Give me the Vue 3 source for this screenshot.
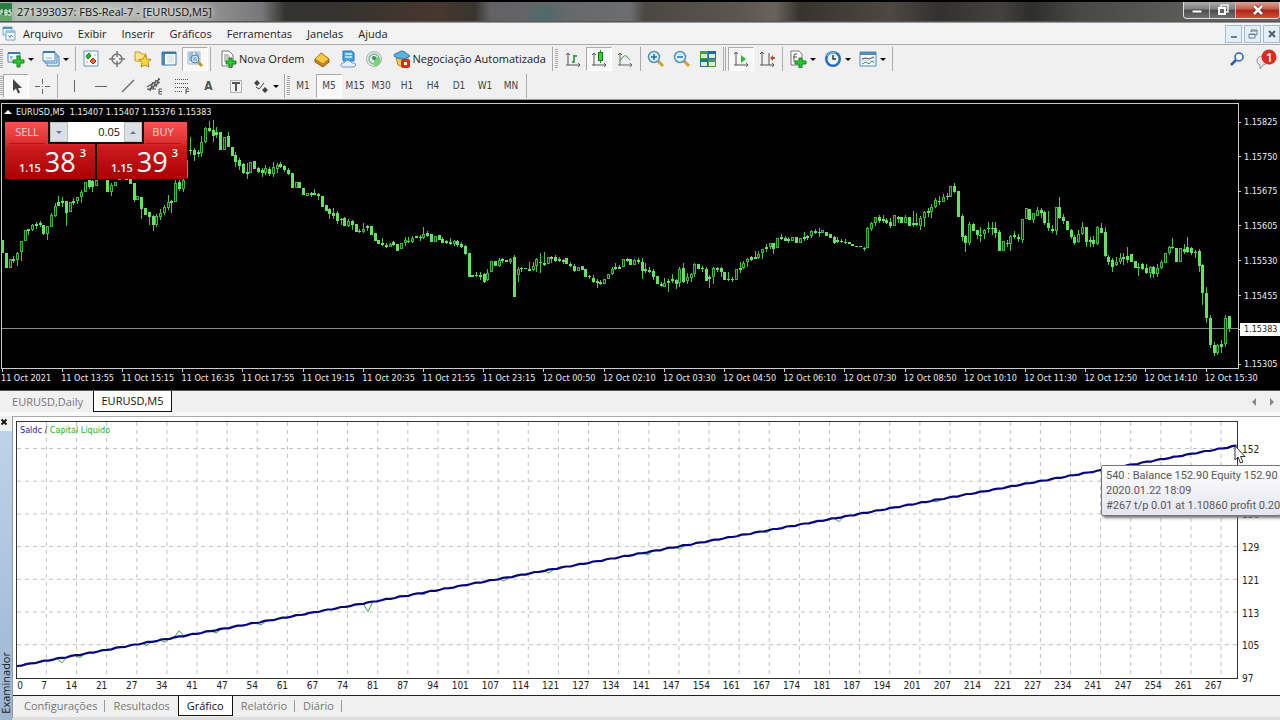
<script setup>
import { ref } from 'vue'

const menus = ['Arquivo', 'Exibir', 'Inserir', 'Gráficos', 'Ferramentas', 'Janelas', 'Ajuda']
const frames = ['M1', 'M5', 'M15', 'M30', 'H1', 'H4', 'D1', 'W1', 'MN']
const lots = ref('0.05')
const activeFrame = ref('M5')

const prices = ['1.15825', '1.15750', '1.15675', '1.15605', '1.15530', '1.15455', '1.15383', '1.15305']
const times = [
  '11 Oct 2021', '11 Oct 13:55', '11 Oct 15:15', '11 Oct 16:35', '11 Oct 17:55', '11 Oct 19:15', '11 Oct 20:35',
  '11 Oct 21:55', '11 Oct 23:15', '12 Oct 00:50', '12 Oct 02:10', '12 Oct 03:30', '12 Oct 04:50', '12 Oct 06:10',
  '12 Oct 07:30', '12 Oct 08:50', '12 Oct 10:10', '12 Oct 11:30', '12 Oct 12:50', '12 Oct 14:10', '12 Oct 15:30'
]

/* Candles: kind (f = falling, h = rising), body top, body bottom, optional high and low. */
const series = [
  { base: 100, first: 0, rows: 'f420,458 f458,503 h478,503 f478,482,468,490 h460,480,455,497 h424,457,424,482 h390,424 f388,393,388,405 h376,390,372,394 f372,378,366,387 f369,375,362,380 f375,402,375,405 h378,402,378,420 h344,380,340,380 h317,347,310,350 f306,318,288,318 f303,308,292,320 f304,338,304,377 h307,337 f303,308,295,315 h290,303,290,313 h277,292,270,308 h245,277 f240,262,240,266 f243,262,240,275 h240,258 f200,220 f200,230 f240,275 h255,275,250,288 h245,258 h220,240 f210,225 f215,240 f238,253 f250,300,250,305 h288,300 f290,327,290,357 f325,345 f337,352,337,375 f348,376,345,393 h348,375,342,380 h338,350,328,360 h322,340,315,346 h305,323,285,330 f303,310,300,340 h250,305,240,305 f245,268,240,273 h240,268,235,277 h180,235 f150,153,110,165 f150,165,145,183 f157,163,150,170 h125,158,108,170 h85,125,80,130 f85,93,62,97 f90,107,60,125 f97,105,80,115 f97,150 h112,150 f108,142,95,142 f140,167 f165,187,155,200 f180,197,175,210 f193,220,190,222 f217,222,190,238 h185,220 f183,207 f205,215,200,220 f210,220,205,230 h205,220,195,225 f207,222,200,228 h202,222,185,232 h195,207,190,220 f192,200,187,205 f198,210,195,215 f210,222,203,225 f220,265 h245,263' },
  { base: 180, first: 79, rows: 'f5,24 f24,44 h38,48 f40,45,36,50 f38,44,28,46 f42,48,38,60 f48,80 f75,93 f88,102,85,118 f100,107,85,118 f99,122,92,132 f117,120,114,135 f115,138,110,138 h123,138,117,140 f123,135,120,150 f132,157 f153,157,147,160 h148,157,130,160 h137,145,135,152 f138,165 f160,182 f180,193 f188,195,175,198 f195,200,188,205 h192,200,188,202 f185,195,182,198 f193,212 h190,208 h180,190,170,198 f183,187,172,190 h173,187,168,190 h167,175 f170,173,165,182 h163,175,142,178 f160,168,152,170 f163,187 h167,187 f165,180 f178,188,172,190 f183,190,180,192 f185,193,175,195 h182,193,180,197 f182,195,180,202 f192,200,187,203 f198,222,195,224 f220,290 f286,290 f285,288,275,290 f285,290,275,300 f283,305,280,310 h278,300,268,302 h243,275 f242,257 h240,257,235,260 f238,243,235,250 f240,246 h238,247,235,252 f230,352,225,352 h267,285,262,305 f265,268,262,275 f263,267 f268,272,245,274 h258,270,245,272 h237,258,233,275 f245,250,220,280 f250,256,217,258 h232,253 f232,238,228,250 f230,242,225,246 f238,243,232,246 f240,245,236,252 f235,253 f252,257,246,260 f257,273,252,276 h262,273 f258,270 f268,290 f288,292,284,296 f293,305,285,308 f303,308,298,325 f305,313,300,315 h297,313 h282,298 h268,283,262,285 h260,268,250,270 f260,266,254,268' },
  { base: 180, first: 165, rows: 'h238,260 f237,242,235,246 f238,254 h240,254,236,256 f240,247,235,252 f247,272,235,297 f268,273,250,280 f270,275,262,280 f272,290,268,300 f287,313 f313,318,306,320 h310,320,295,322 f303,308,298,335 f297,303,283,310 f300,312,298,328 h268,308,262,320 f265,305,248,308 h292,303,280,312 h283,293,280,305 h252,283,250,290 f253,267 f263,268,257,275 f267,302,262,304 f292,297,286,325 h265,290,262,312 f265,270,262,276 f265,275,262,290 f275,300 f297,300,277,304 f297,300,290,305 h268,300 f263,270,245,280 h248,265,242,268 h237,247,235,260 f232,240,228,242 f230,237,213,238 h222,235,213,237 h208,220,206,237 h200,208,192,215 h190,202,188,206 f190,207,188,223 h175,205 f172,177,163,180 f173,182,168,184 f177,182,172,188 h170,182 f170,188 h175,188 f172,177,157,182 h168,175,164,180 h153,168,150,174 f153,158,148,162 f155,160,143,170 h150,160 f155,167 f163,173 f172,190,168,193 f180,187,170,190 f182,186,177,190 f185,187,177,193 f185,193 f193,197 f198,200 f198,202 f203,207,202,213 h145,205,142,205 h128,147,126,153 h112,130,110,138 f110,123,106,128 f117,123,105,128 f120,128,114,132 f125,137,115,143 h105,138 f112,116,107,130 f110,128 h110,128,106,130 f112,137 f130,134,93,140 f130,135,100,138 h113,137,108,150 h95,113,93,140 f93,98,84,112 h80,97,72,115 h60,82,53,84 f63,66,47,74' },
  { base: 170, first: 250, rows: 'h80,95,72,97 f77,82,70,90 h48,80 f47,65,38,68 f62,140 f138,200,133,213 f197,220,194,247 h163,218,155,225 f163,182,160,184 f180,195,180,207 f195,198,170,217 h180,193,176,207 f173,177,157,188 f173,178,157,195 f175,190,157,205 f187,242,180,243 h213,242 f218,222,210,230 h197,223,194,243 f195,200,183,208 f200,208,193,217 h147,210,147,218 h115,148 f117,150 h130,150,128,158 h120,137,110,139 f120,130,115,145 f127,158,123,165 f158,175,123,182 f177,182,165,190 h112,182,110,195 f112,145,82,148 f140,152,132,162 f152,180 f180,200,178,208 f200,220,196,225 h193,217,180,220 h172,193,157,195 f172,217,170,232 f210,217,200,230 f210,222,197,230 h172,223,168,225 f175,188,160,190 f185,258,172,260 f260,275,256,285 f270,290,265,305 h275,285,262,288 h263,275,250,283 f262,268,250,285 f257,270,232,280 f253,275 f273,293 f290,294,280,318 f283,297,280,300 f293,310,282,312 h292,310,287,325 f290,313,288,323 h293,313,282,320 h277,295,270,297 h248,280 h230,250,227,255 f230,235,203,238 f235,275 h235,275 f237,245,222,252 f232,247,200,250 f235,250,230,256 f245,250,240,265 f243,288,238,305 f285,368,283,405 f368,445,350,458 f445,525,435,535 f525,548,515,558 h525,548,522,555 f522,530,510,550 h445,523,435,530 f438,473,438,487' }
]
const candles = series.flatMap(({ base, first, rows }) =>
  rows.split(' ').map((row, n) => {
    const [top, bottom, high, low] = row.slice(1).split(',').map(Number)
    const y = v => Math.round(base + v / 3)
    const x = Math.round(2 + (first + n) * 3.763)
    return {
      x, rising: row[0] === 'h', top: y(top), bottom: Math.max(y(bottom), y(top) + 1),
      high: y(high || top), low: y(low || bottom)
    }
  })
)
const timeTicks = times.map((_, i) => 2 + i * 60.2)
const priceTicks = prices.map((_, i) => 122 + i * 34.6)

const tradeLabels = [0, 7, 14, 21, 27, 34, 41, 47, 54, 61, 67, 74, 81, 87, 94, 101, 107, 114, 121, 127, 134, 141, 147,
  154, 161, 167, 174, 181, 187, 194, 201, 207, 214, 221, 227, 234, 241, 247, 254, 261, 267]
const balanceLabels = ['152', '', '136', '129', '121', '113', '105', '97']
const gridX = Array.from({ length: 40 }, (_, i) => 46.4 + i * 30.12)
const gridY = Array.from({ length: 7 }, (_, i) => 447.5 + i * 32.7)
const balanceY = x => 665 - (x - 17) * 220 / 1218
const balance = Array.from({ length: 272 }, (_, i) => {
  const x = 17 + i * 4.5
  return `${x},${(balanceY(x) + Math.sin(i * 1.9) * 0.5).toFixed(1)}`
}).join(' ')
const dips = [[62, 5], [80, 3], [147, 3], [165, 3], [179, -6], [216, 3], [261, 3], [368, 9], [424, 2], [504, 3], [549, 3], [648, 3], [680, 3], [767, 2], [839, 4], [937, 2]]
const equity = dips.map(([x, d]) => `M${x - 5} ${balanceY(x - 5)}L${x} ${balanceY(x) + d}L${x + 5} ${balanceY(x + 5)}`).join('')
</script>

<template>
  <div class="window">
    <header class="title">
      <svg class="logo" viewBox="0 0 12 18"><rect width="12" height="18" rx="1" fill="#2c7c40" /><rect y="12" width="12" height="6" fill="#63a66c" /><path d="M1 7v5M1 7h2M1 9h2M5 7v5h2V7zM5 9.500h2M11 7H9v2h2v3H8" stroke="#fff" fill="none" /></svg>
      <h1>271393037: FBS-Real-7 - [EURUSD,M5]</h1>
      <div class="controls">
        <button aria-label="Minimizar"><svg viewBox="0 0 14 12"><rect x="2" y="6" width="10" height="3" fill="#fff" stroke="#555" /></svg></button>
        <button aria-label="Restaurar"><svg viewBox="0 0 14 12"><path d="M5 3V1h7v7h-2" fill="none" stroke="#eee" stroke-width="1.500" /><rect x="3" y="4" width="6" height="6" fill="#666" stroke="#fff" stroke-width="2" /></svg></button>
        <button class="close" aria-label="Fechar"><svg viewBox="0 0 14 12"><path d="M3 2l8 8M11 2l-8 8" stroke="#5b2a25" stroke-width="4" /><path d="M3 2l8 8M11 2l-8 8" stroke="#fff" stroke-width="2.500" /></svg></button>
      </div>
    </header>

    <nav class="menu">
      <svg class="doc" viewBox="0 0 14 15"><path d="M1 1h9v8H1z" fill="#e8f5fc" stroke="#69a7cd" /><path d="M1 2h9" stroke="#4c91c4" stroke-width="2" /><path d="M4 5h9v9H4z" fill="#f4fbff" stroke="#69a7cd" /><path d="M4 6h9" stroke="#8fc0df" stroke-width="2" /><path d="M6 9l2 3 1-3 2 2" fill="none" stroke="#6c98b5" /></svg>
      <button v-for="m in menus" :key="m">{{ m }}</button>
      <div class="mdi">
        <button aria-label="Minimizar gráfico"><svg viewBox="0 0 10 10"><path d="M2 8h6" stroke="#6a8090" stroke-width="2" /></svg></button>
        <button aria-label="Restaurar gráfico"><svg viewBox="0 0 10 10"><path d="M3 3V1h6v5H7M3 2h6M1 5h6v4H1zM1 5.500h6" fill="none" stroke="#6a8090" /></svg></button>
        <button aria-label="Fechar gráfico"><svg viewBox="0 0 10 10"><path d="M2 2l6 6M8 2l-6 6" stroke="#53646f" stroke-width="2" /></svg></button>
      </div>
    </nav>

    <div class="bars">
      <div class="bar main">
        <i class="grip"></i>
        <button class="drop" aria-label="Novo gráfico"><svg viewBox="0 0 18 18"><path d="M1 3h12v9H1z" fill="#f4faff" stroke="#4b88bd" /><path d="M1 3h12" stroke="#3b79b4" stroke-width="2" /><path d="M4 6v4M3 7h3M10 5v3" stroke="#6e9cc0" /><path d="M10 6h3v4h4v3h-4v4h-3v-4H6v-3h4z" fill="#22cc2c" stroke="#12841a" /></svg><b></b></button>
        <button class="drop" aria-label="Perfis"><svg viewBox="0 0 18 18"><path d="M5 6h12v10H5z" fill="#d8eaf8" stroke="#4b88bd" /><path d="M3 4h12v9H3z" fill="#d8eaf8" stroke="#4b88bd" /><path d="M1 2h12v9H1z" fill="#f4faff" stroke="#4b88bd" /><path d="M1 2h12" stroke="#3b79b4" stroke-width="2" /><path d="M4 8h6" stroke="#8cb2d2" /></svg><b></b></button>
        <i class="sep"></i>
        <button aria-label="Observação do mercado"><svg viewBox="0 0 18 18"><path d="M2 1h14v15H2z" fill="#fbfdff" stroke="#5a97c2" /><path d="M4 6l3-3 2 3-3 3z" fill="#33bb38" stroke="#14751a" /><path d="M8 11l3-3 3 3-3 3z" fill="#f06030" stroke="#b03010" /><path d="M4 12h2M12 5h2" stroke="#9ab" /></svg></button>
        <button aria-label="Janela de dados"><svg viewBox="0 0 18 18"><circle cx="9" cy="9" r="5" fill="none" stroke="#777" stroke-width="1.500" /><path d="M9 1v6M9 11v6M1 9h6M11 9h6" stroke="#777" stroke-width="1.500" /></svg></button>
        <button aria-label="Navegador"><svg viewBox="0 0 18 18"><path d="M1 2h5l1 2h5v7H1z" fill="#ffe58a" stroke="#c69a24" /><path d="M11 5l2 4 4 .5-3 3 1 4.500-4-2-4 2 1-4.500-3-3 4-.5z" fill="#ffd83c" stroke="#b98a18" /></svg></button>
        <button aria-label="Terminal"><svg viewBox="0 0 18 18"><path d="M2 2h14v13H2z" fill="#fff" stroke="#3c78b0" /><path d="M2 3h14" stroke="#3c78b0" stroke-width="2" /><path d="M3.500 4v11" stroke="#4c88ba" stroke-width="3" /><path d="M7 6h7M7 8h7M7 10h7M7 12h7" stroke="#c5d4df" /></svg></button>
        <button class="on" aria-label="Testador de estratégia"><svg viewBox="0 0 18 18"><path d="M2 2h12v12H2z" fill="#dfeffb" stroke="#9cbbd2" /><path d="M4 3v8M6 2v7M10 2v7M12 3v8" stroke="#5c8cb0" /><circle cx="9" cy="9" r="4" fill="#c9e4f7" stroke="#4b83b0" /><path d="M8 7v4M10 7v4" stroke="#6c9cc0" /><path d="M12 12l4 4" stroke="#c49a30" stroke-width="3" /></svg></button>
        <i class="sep"></i>
        <button class="text"><svg viewBox="0 0 18 18"><path d="M3 1h7l4 4v11H3z" fill="#fff" stroke="#777" /><path d="M5 5h5M5 7h6M5 9h5M5 11h3" stroke="#888" /><path d="M10 8h3v3h4v3h-4v4h-3v-4H7v-3h3z" fill="#22cc2c" stroke="#12841a" /></svg>Nova Ordem</button>
        <button aria-label="MetaEditor"><svg viewBox="0 0 18 18"><path d="M2 9l6-6 8 6v3l-6 5-8-5z" fill="#c9861c" stroke="#956012" /><path d="M2 9l6-6 8 6-6 5z" fill="#fbc844" stroke="#b57a14" /></svg></button>
        <button aria-label="Nuvem"><svg viewBox="0 0 18 18"><path d="M4 1h9l2 2v8H4z" fill="#41a6e4" stroke="#2478b8" /><path d="M6 4h7M6 7h7" stroke="#d8effd" stroke-width="1.500" /><path d="M4 17q-3-1-2-3 1-2 3-1 2-4 6-2l2 2q3-1 4 2-1 2-3 2z" fill="#e7eefa" stroke="#7c94bd" /></svg></button>
        <button aria-label="Sinais"><svg viewBox="0 0 18 18"><circle cx="9" cy="9" r="7.500" fill="#e1ece8" stroke="#a0b7b4" /><circle cx="9" cy="9" r="5" fill="none" stroke="#8ab5a2" stroke-width="1.500" /><path d="M9 8v9q6-1 7-7-2-4-7-2z" fill="#7bd07c" /><circle cx="9" cy="8" r="2" fill="#2c9a48" /></svg></button>
        <button class="text"><svg viewBox="0 0 18 18"><path d="M3 7l2 8 5 2 5-3V7z" fill="#f2ca48" stroke="#b98b1c" /><path d="M1 6q0-3 4-3 4-4 8 0l4 3q-3 3-8 3T1 6z" fill="#58b4dc" stroke="#2b7ba8" /><rect x="8" y="9" width="9" height="9" rx="2" fill="#e02a18" /><rect x="11" y="12" width="3" height="3" fill="#fff" /></svg>Negociação Automatizada</button>
        <i class="sep"></i><i class="grip"></i>
        <button aria-label="Barras"><svg viewBox="0 0 18 18"><path d="M4 3v12h12M2 5l2-2 2 2M14 13l2 2-2 2M2 15h2" fill="none" stroke="#555" /><path d="M8 12h2V5M10 6h3" fill="none" stroke="#179020" stroke-width="1.500" /></svg></button>
        <button class="on" aria-label="Velas"><svg viewBox="0 0 18 18"><path d="M4 3v12h12M2 5l2-2 2 2M14 13l2 2-2 2M2 15h2" fill="none" stroke="#555" /><path d="M10.500 0v13" stroke="#179020" /><rect x="8.500" y="2.500" width="4" height="8" fill="#35d03c" stroke="#127a18" /></svg></button>
        <button aria-label="Linha"><svg viewBox="0 0 18 18"><path d="M4 3v12h12M2 5l2-2 2 2M14 13l2 2-2 2M2 15h2" fill="none" stroke="#666" /><path d="M4 11q5-9 8-3l2 2" fill="none" stroke="#3a9d40" /></svg></button>
        <i class="sep"></i>
        <button aria-label="Ampliar"><svg viewBox="0 0 18 18"><path d="M11 11l5 5" stroke="#d0a22c" stroke-width="3" /><circle cx="7" cy="7" r="5.500" fill="#dff1fc" stroke="#4f93c4" stroke-width="1.500" /><path d="M4 7h6M7 4v6" stroke="#286ea8" stroke-width="1.500" /></svg></button>
        <button aria-label="Reduzir"><svg viewBox="0 0 18 18"><path d="M11 11l5 5" stroke="#d0a22c" stroke-width="3" /><circle cx="7" cy="7" r="5.500" fill="#dff1fc" stroke="#4f93c4" stroke-width="1.500" /><path d="M4 7h6" stroke="#286ea8" stroke-width="1.500" /></svg></button>
        <button aria-label="Organizar janelas"><svg viewBox="0 0 18 18"><path d="M1 1h8v8H1zM9 9h8v8H9z" fill="#45a03a" /><path d="M9 1h8v8H9zM1 9h8v8H1z" fill="#2866a8" /><path d="M2 4h6v4H2zM10 4h6v4h-6zM2 12h6v4H2zM10 12h6v4h-6z" fill="#d9f0d8" /></svg></button>
        <i class="sep pair"></i>
        <button class="on" aria-label="Rolagem automática"><svg viewBox="0 0 18 18"><path d="M4 2v13h12M2 4l2-2 2 2M14 13l2 2-2 2M2 15h2" fill="none" stroke="#555" /><path d="M9 5l5 4-5 4z" fill="#2eb738" /></svg></button>
        <button aria-label="Deslocar gráfico"><svg viewBox="0 0 18 18"><path d="M4 2v13h12M2 4l2-2 2 2M14 13l2 2-2 2M2 15h2M11 3v12" fill="none" stroke="#555" /><path d="M12 8l3-3v2h2v2h-2v2z" fill="#c54a28" /></svg></button>
        <i class="sep"></i>
        <button class="drop" aria-label="Indicadores"><svg viewBox="0 0 18 18"><path d="M2 1h8l3 3v11H2z" fill="#fff" stroke="#777" /><path d="M8 4q-3-1-3 2v6M4 7h4" fill="none" stroke="#555" /><path d="M10 8h3v3h4v3h-4v4h-3v-4H6v-3h4z" fill="#22cc2c" stroke="#12841a" /></svg><b></b></button>
        <button class="drop" aria-label="Períodos"><svg viewBox="0 0 18 18"><circle cx="9" cy="9" r="8" fill="#246eb8" /><circle cx="9" cy="9" r="5.500" fill="#edf6fc" /><path d="M9 5v4h3" fill="none" stroke="#333" stroke-width="1.500" /><path d="M3 6q3-5 9-3" fill="none" stroke="#70b8ec" stroke-width="1.500" /></svg><b></b></button>
        <button class="drop" aria-label="Modelos"><svg viewBox="0 0 18 18"><path d="M1 2h16v14H1z" fill="#f8fcff" stroke="#4f8dbd" /><path d="M1 3.500h16" stroke="#4f8dbd" stroke-width="3" /><path d="M3 9l4-1 3 1 5-2" fill="none" stroke="#444" /><path d="M3 14l4-2 3 2 3-3 2 2" fill="none" stroke="#409848" /><path d="M2 10.500h14" stroke="#cde" /></svg><b></b></button>
        <i class="sep"></i>
        <div class="tools">
          <button aria-label="Pesquisar"><svg viewBox="0 0 14 14"><circle cx="9" cy="5" r="4" fill="#eef5ff" stroke="#2b5cb4" stroke-width="1.500" /><path d="M6 8l-5 5" stroke="#2b5cb4" stroke-width="2.500" /></svg></button>
          <button class="alert" aria-label="Notificações"><svg viewBox="0 0 24 24"><path d="M3 14q0-5 6-5 5 0 5 4t-5 5l-3 4v-4q-3-1-3-4z" fill="#e8e8e8" stroke="#999" /><circle cx="15" cy="10" r="7.500" fill="#dc2b1c" /></svg><span>1</span></button>
        </div>
      </div>
      <div class="bar draw">
        <i class="grip"></i>
        <button class="point on" aria-label="Cursor"><svg viewBox="0 0 18 18"><path d="M6 2v12l3-2.500 2 5 2-1-2-4.500h4z" fill="#444" /></svg></button>
        <button class="point" aria-label="Mira"><svg viewBox="0 0 18 18"><path d="M9.500 2v5M9.500 12v5M2 9.500h5M12 9.500h5M9 9.500h1" stroke="#666" /></svg></button>
        <i class="sep"></i>
        <button aria-label="Linha vertical"><svg viewBox="0 0 18 18"><path d="M9.500 3v12" stroke="#666" /></svg></button>
        <button aria-label="Linha horizontal"><svg viewBox="0 0 18 18"><path d="M3 9.500h12" stroke="#666" /></svg></button>
        <button aria-label="Linha de tendência"><svg viewBox="0 0 18 18"><path d="M3 15L15 3" stroke="#666" stroke-width="1.200" /></svg></button>
        <button aria-label="Canal"><svg viewBox="0 0 18 18"><path d="M1 10L14 2M2 13L14 5M4 14L7 5M7 12L10 3M10 10L13 1M1 12h9" stroke="#555" stroke-width="1.200" /><path d="M16 12h-3v5h3M13 14.500h3" fill="none" stroke="#555" /></svg></button>
        <button aria-label="Fibonacci"><svg viewBox="0 0 18 18"><path d="M2 2.500h13M2 6.500h13M2 10.500h13M2 14.500h8" stroke="#555" stroke-dasharray="1 1" /><path d="M16 12h-3v5M13 14.500h3" fill="none" stroke="#555" /></svg></button>
        <button class="letter">A</button>
        <button aria-label="Etiqueta"><svg viewBox="0 0 18 18"><rect x="3.500" y="3.500" width="11" height="12" fill="none" stroke="#777" stroke-dasharray="1 1" /><path d="M5 6h8M9 6v8" stroke="#555" stroke-width="2" /></svg></button>
        <button class="drop" aria-label="Setas"><svg viewBox="0 0 18 18"><path d="M5 3l3 3-3 3-3-3zM13 10l3 3-3 3-3-3z" fill="#444" /><path d="M12 6l-5 6-3-2" fill="none" stroke="#444" /></svg><b></b></button>
        <i class="sep"></i><i class="grip"></i>
        <button v-for="f in frames" :key="f" class="frame" :class="{ on: f === activeFrame }" @click="activeFrame = f">{{ f }}</button>
        <i class="sep"></i>
      </div>
    </div>

    <section class="chart">
      <div class="row">
        <svg class="plot" viewBox="2 104 1236 264" preserveAspectRatio="none">
          <path d="M2 328h1236" stroke="#8a8a8a" />
          <g v-for="(c, i) in candles" :key="i">
            <rect :x="c.x" :y="c.high" width="1" :height="c.low - c.high" fill="#45c945" />
            <rect v-if="c.rising && c.bottom - c.top > 2" :x="c.x - 1" :y="c.top" width="3" :height="c.bottom - c.top" fill="#3fb53f" />
            <rect v-if="c.rising && c.bottom - c.top > 2" :x="c.x" :y="c.top + 1" width="1" :height="c.bottom - c.top - 2" fill="#0c3a0c" />
            <rect v-else :x="c.x - 1" :y="c.top" width="3" :height="c.bottom - c.top" fill="#66e066" />
          </g>
          <path v-for="x in timeTicks" :key="'t' + x" :d="`M${x} 368v4`" stroke="#ccc" />
          <path v-for="y in priceTicks" :key="'p' + y" :d="`M1238 ${y}h3`" stroke="#ccc" />
        </svg>
        <ul class="prices"><li v-for="p in prices" :key="p" :class="{ now: p === '1.15383' }">{{ p }}</li></ul>
      </div>
      <ul class="times"><li v-for="t in times" :key="t">{{ t }}</li></ul>
      <p class="quote"><i></i>EURUSD,M5&nbsp; 1.15407 1.15407 1.15376 1.15383</p>
      <div class="trade">
        <button class="side"><span>SELL</span><em><small>1.15</small><strong>38</strong><sup>3</sup></em></button>
        <button class="side buy"><span>BUY</span><em><small>1.15</small><strong>39</strong><sup>3</sup></em></button>
        <div class="lots">
          <button aria-label="Diminuir volume"><i class="down"></i></button>
          <input v-model="lots" aria-label="Volume">
          <button aria-label="Aumentar volume"><i class="up"></i></button>
        </div>
      </div>
    </section>

    <nav class="charttabs">
      <button>EURUSD,Daily</button>
      <button class="active">EURUSD,M5</button>
      <div class="scroll"><button aria-label="Abas anteriores"><i class="left"></i></button><button aria-label="Próximas abas"><i class="right"></i></button></div>
    </nav>

    <section class="tester">
      <aside>
        <button aria-label="Fechar painel"><svg viewBox="0 0 8 8"><path d="M1.500 1.500l5 5M6.500 1.500l-5 5" stroke="#111" stroke-width="1.800" /></svg></button>
        <h2>Examinador</h2>
      </aside>
      <div class="panel">
        <div class="graph">
          <div class="row">
            <svg class="curve" viewBox="17 421 1220 256" preserveAspectRatio="none">
              <g stroke="#c3c3c3" stroke-dasharray="4 4">
                <path v-for="x in gridX" :key="'x' + x" :d="`M${x} 421v256`" />
                <path v-for="y in gridY" :key="'y' + y" :d="`M17 ${y}h1220`" />
              </g>
              <path :d="equity" fill="none" stroke="#3aa545" />
              <polyline :points="balance" fill="none" stroke="#070780" stroke-width="2.200" />
            </svg>
            <ul class="values"><li v-for="(b, i) in balanceLabels" :key="i">{{ b }}</li></ul>
          </div>
          <ul class="trades"><li v-for="t in tradeLabels" :key="t">{{ t }}</li></ul>
          <p class="legend"><span>Saldc</span> / <b>Capital Líquido</b></p>
          <div class="tip">540 : Balance 152.90 Equity 152.90<br>2020.01.22 18:09<br>#267 t/p 0.01 at 1.10860 profit 0.20</div>
          <svg class="pointer" viewBox="0 0 12 19"><path d="M1 1v14l3-3 2.500 6 2.500-1-2.500-5.500H11z" fill="#fff" stroke="#333" /></svg>
        </div>
        <nav class="tabs">
          <button>Configurações</button><button>Resultados</button><button class="active">Gráfico</button><button>Relatório</button><button>Diário</button>
        </nav>
      </div>
    </section>
  </div>
</template>

<style>
body { margin: 0; background: #f0f0f0; }
</style>

<style scoped>
* { box-sizing: border-box; }
.window { display: flex; flex-direction: column; min-height: 100vh; overflow: hidden; background: #f0f0f0; color: #222; font: 12px/16px "Open Sans", "Noto Sans", sans-serif; }
button { padding: 0; border: 0; background: none; color: inherit; font: inherit; white-space: nowrap; }
ul, p, h1, h2 { margin: 0; padding: 0; list-style: none; font-weight: 400; }
svg { display: block; flex: none; }

.title { display: flex; align-items: center; height: 23px; border-top: 2px solid #000; border-bottom: 1px solid #999; box-shadow: inset 0 -1px #555;
  background: radial-gradient(ellipse 22px 20px at 545px 14px, #4d6a6a, transparent), linear-gradient(90deg, #a9b5aa 0, #b3b3b0 160px, #929290 210px, #77777a 262px, #33332f 285px, #35332f 340px, #47372f 440px, #38342f 475px, #626264 490px, #6b6d6f 630px, #4b4743 645px, #5b5651 740px, #68635f 775px, #37332e 800px, #4d4843 890px, #32312f 940px, #44423e 1000px, #2e2e2c 1030px, #484844 1080px, #5a5a57 1180px, #666 1280px); }
.logo { width: 12px; height: 18px; }
.title h1 { margin-left: 5px; color: #111; font-size: 11px; text-shadow: 0 0 6px #fff, 0 0 8px #fff; }
.controls { display: flex; align-self: flex-start; height: 17px; margin-left: auto; border: 1px solid #ddd; border-top: 0; border-radius: 0 0 4px 4px; overflow: hidden; }
.controls button { display: grid; place-items: center; width: 26px; border-right: 1px solid #bbb; background: linear-gradient(#aaa, #808080 45%, #4b4b4b 50%, #727272); }
.controls .close { width: 43px; border: 0; background: linear-gradient(#dba398, #c55b4b 45%, #ad2414 50%, #cf5138); }
.controls svg { width: 14px; height: 12px; }

.menu { display: flex; align-items: center; gap: 15px; height: 22px; border-bottom: 1px solid #aaa; background: #f3f3f3; font-size: 11px; }
.doc { width: 14px; height: 15px; margin: 0 -8px 0 2px; }
.mdi { display: flex; gap: 2px; margin-left: auto; }
.mdi button { display: grid; place-items: center; width: 17px; height: 18px; border: 1px solid #a7bccb; background: #e2eff8; }
.mdi svg { width: 10px; height: 10px; }

.bars { border-bottom: 1px solid #999; }
.bar { display: flex; align-items: center; height: 28px; }
.bar.draw { height: 26px; }
.bar button { display: flex; align-items: center; justify-content: center; width: 26px; height: 24px; }
.bar svg { width: 18px; height: 18px; }
.bar button.on { border: 1px solid #aaa; border-right-color: #fff; border-bottom-color: #fff; background: #f8f8f8; }
.bar button.text { width: auto; gap: 2px; padding: 0 4px 0 6px; font-size: 11px; }
.bar button.drop { gap: 3px; width: 35px; }
.drop b { border: 3px solid transparent; border-top-color: #000; border-bottom: 0; }
.grip { width: 3px; height: 20px; margin-right: 2px; background: repeating-linear-gradient(#aaa 0 1px, #f0f0f0 1px 2px); }
.grip:first-child, .draw .grip { margin-right: 0; }
.sep { width: 1px; height: 24px; margin: 0 2px; background: #aaa; }
.sep.pair { width: 3px; border: 1px solid #aaa; border-width: 0 1px; background: none; }
.bar .tools { display: flex; align-items: center; margin-left: auto; }
.tools svg { width: 14px; height: 14px; }
.bar .alert { position: relative; width: 28px; margin-left: 2px; }
.alert svg { width: 24px; height: 24px; }
.alert span { position: absolute; top: 3px; left: 14px; color: #fff; font-weight: 600; }
.draw button { width: 27px; color: #555; }
.bar button.point { width: 26px; }
.draw button.drop { width: 33px; }
.draw .letter { font: bold 12px/16px "DejaVu Sans Condensed", sans-serif; }
.draw .frame { width: 26px; color: #444; font: 10px/14px "DejaVu Sans Condensed", "Noto Sans", sans-serif; }

.chart { position: relative; padding: 3px 0 5px 1px; background: #000; color: #eee; font: 9px/14px "DejaVu Sans Condensed", "Noto Sans", sans-serif; }
.row { display: flex; }
.plot { flex: 1; width: 0; height: 266px; border: 1px solid #ccc; overflow: visible; shape-rendering: crispEdges; }
.prices { display: flex; flex-direction: column; justify-content: space-between; width: 41px; height: 256px; margin: 12px 0 -4px; padding-left: 1px; }
.prices li { padding-left: 4px; }
.prices .now { height: 13px; background: #fff; color: #222; line-height: 13px; }
.times { display: grid; grid-template-columns: repeat(21, minmax(0, 1fr)); padding: 2px 15px 0 0; white-space: nowrap; }
.quote { position: absolute; top: 5px; left: 4px; display: flex; align-items: center; gap: 4px; }
.quote i { border: 4px solid transparent; border-top: 0; border-bottom-color: #fff; }
.trade { position: absolute; top: 22px; left: 5px; display: flex; gap: 2px; font-family: "Open Sans", "Noto Sans", sans-serif; }
.side { position: relative; width: 90px; height: 57px; background: linear-gradient(#f65454, #df3030 35%, #cc1a1c 45%, #a90004); color: #fff; text-align: left; }
.side span { position: absolute; top: 3px; left: 4px; width: 36px; height: 19px; border-bottom: 1px solid #a61c1c; color: #ffd5d5; font-size: 11px; line-height: 14px; text-align: center; }
.side.buy span { left: 48px; }
.side em { position: absolute; right: 9px; bottom: 2px; display: flex; align-items: flex-end; font-style: normal; }
.side small { margin-right: 4px; font-size: 11px; line-height: 18px; font-weight: 600; }
.side strong { font-size: 27px; line-height: 31px; font-weight: 400; }
.side sup { align-self: flex-start; margin-left: 4px; font-size: 11px; line-height: 14px; font-weight: 600; }
.lots { position: absolute; top: 0; left: 43px; display: flex; width: 96px; height: 22px; border: 2px solid #111; border-top: 0; background: #fff; }
.lots button { display: grid; place-items: center; width: 18px; background: #dcdfe3; border: 1px solid #c0c0c0; }
.lots input { flex: 1; width: 0; padding: 0 4px; border: 0; outline: 0; text-align: right; color: #111; background: #fff; font: 11px/18px "Open Sans", sans-serif; }
.lots i { border: 3px solid transparent; }
.lots .down { border-top-color: #5878b8; border-bottom: 0; }
.lots .up { border-bottom-color: #5878b8; border-top: 0; }

.charttabs { display: flex; height: 26px; padding-bottom: 4px; border-top: 1px solid #555; box-shadow: inset 0 -4px #fafafa; color: #777; font-size: 11px; }
.charttabs > button { width: 79px; }
.charttabs > button:first-child { width: 93px; padding-left: 2px; }
.charttabs .active { border: 1px solid #111; border-top: 0; background: #fff; color: #111; }
.scroll { display: flex; align-items: center; gap: 14px; margin-left: auto; padding-right: 6px; }
.scroll i { display: block; border: 4px solid transparent; }
.scroll .left { border-right-color: #888; border-left: 0; }
.scroll .right { border-left-color: #888; border-right: 0; }

.tester { display: flex; flex: 1; }
aside { display: flex; flex-direction: column; justify-content: space-between; width: 12px; padding-bottom: 6px; background: linear-gradient(#f0f0f0 0 15px, #bed3e9 15px, #9bb5d2); }
aside svg { width: 8px; height: 8px; margin-top: 2px; }
aside h2 { width: 12px; writing-mode: vertical-rl; transform: rotate(180deg); font-size: 11px; line-height: 12px; }
.panel { display: flex; flex: 1; flex-direction: column; min-width: 0; border-left: 1px solid #999; border-bottom: 3px solid #ddd; }
.graph { position: relative; padding: 4px 0 2px 3px; border-top: 1px solid #aaa; background: #fff; color: #222; font: 10px/14px "DejaVu Sans Condensed", "Noto Sans", sans-serif; }
.curve { flex: 1; width: 0; height: 258px; border: 1px solid #333; }
.values { display: flex; flex-direction: column; justify-content: space-between; width: 42px; height: 243px; margin: 22px 0 -8px; padding-left: 4px; }
.values li { height: 14px; }
.trades { display: grid; grid-template-columns: 7px 24fr repeat(39, minmax(0, 30fr)); padding-right: 58px; text-align: right; }
.legend { position: absolute; top: 6px; left: 7px; font-size: 9px; }
.legend span { color: #1c1ca0; }
.legend b { color: #18b828; font-weight: 400; }
.tip { position: absolute; top: 48px; right: -1px; width: 180px; padding: 2px 4px; border: 1px solid #767676; border-radius: 2px; background: linear-gradient(#fff, #e4e5f0); box-shadow: 2px 2px 3px #777; color: #575757; font: 11px/15px Roboto, "Noto Sans", sans-serif; white-space: nowrap; }
.pointer { position: absolute; top: 28px; right: 34px; width: 12px; height: 19px; }
.tabs { display: flex; flex: 1; border-top: 1px solid #222; color: #777; font-size: 11px; }
.tabs button { position: relative; height: 20px; padding: 0 8px; }
.tabs button:first-child { padding-left: 11px; }
.tabs button:not(.active)::after { content: ""; position: absolute; right: 0; top: 4px; height: 12px; border-right: 1px solid #999; }
.tabs button:nth-child(2)::after { display: none; }
.tabs .active { border: 1px solid #111; border-top: 0; background: #fff; color: #111; }
</style>
